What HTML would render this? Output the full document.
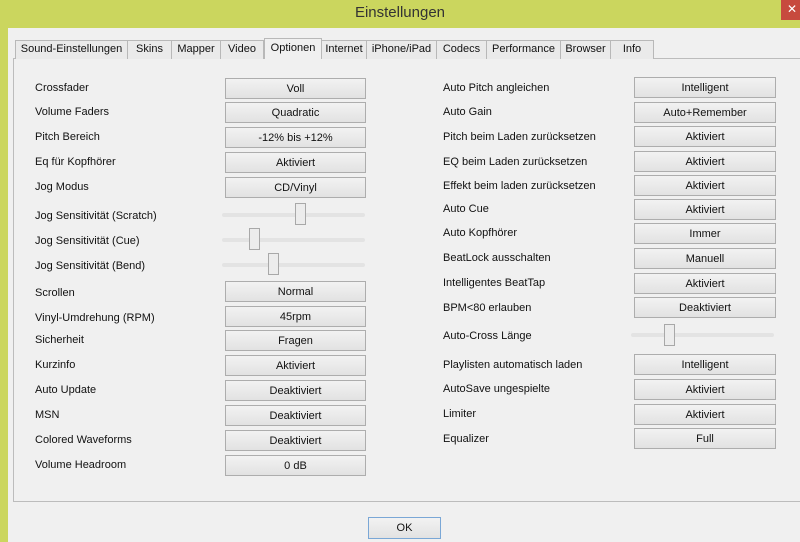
<!DOCTYPE html>
<html><head><meta charset="utf-8"><style>
*{margin:0;padding:0;box-sizing:border-box}
body{width:800px;height:542px;overflow:hidden;background:#cbd65e;font-family:"Liberation Sans",sans-serif;font-size:11px;color:#111;position:relative}
.client{position:absolute;left:8px;top:28px;right:0;bottom:0;background:#f0f0f0}
.title{position:absolute;top:4px;left:0;width:800px;text-align:center;font-size:15px;color:#333}
.close{position:absolute;left:781px;top:0;width:30px;height:20px;background:#c74a3e;color:#fff;font-size:12px;padding-left:6px;line-height:18px}
.panel{position:absolute;left:13px;top:58px;width:790px;height:444px;border:1px solid #bcbcbc;background:#f0f0f0}
.tab{position:absolute;top:40px;height:19px;border:1px solid #b8b8b8;border-bottom:none;background:#eaeaea;text-align:center;line-height:17px;font-size:11px}
.tab.sel{top:38px;height:21px;background:#f0f0f0;z-index:2;line-height:19px}
.l{position:absolute;font-size:11px}
.b{position:absolute;height:21px;border:1px solid #adadad;background:linear-gradient(#f2f2f2,#e2e2e2);text-align:center;line-height:20px;font-size:11px}
.tr{position:absolute;height:4px;background:#e3e3e3;border-radius:2px}
.th{position:absolute;width:11px;height:22px;border:1px solid #a8a8a8;background:#ececec}
</style></head><body>
<div class="title">Einstellungen</div>
<div class="close">✕</div>
<div class="client"></div>
<div class="panel"></div>
<div class="tab" style="left:15px;width:113px">Sound-Einstellungen</div>
<div class="tab" style="left:127px;width:45px">Skins</div>
<div class="tab" style="left:171px;width:50px">Mapper</div>
<div class="tab" style="left:220px;width:44px">Video</div>
<div class="tab sel" style="left:264px;width:58px">Optionen</div>
<div class="tab" style="left:321px;width:46px">Internet</div>
<div class="tab" style="left:366px;width:71px">iPhone/iPad</div>
<div class="tab" style="left:436px;width:51px">Codecs</div>
<div class="tab" style="left:486px;width:75px">Performance</div>
<div class="tab" style="left:560px;width:51px">Browser</div>
<div class="tab" style="left:610px;width:44px">Info</div>

<div class="l" style="left:35px;top:82px">Crossfader</div><div class="b" style="left:225px;top:78px;width:141px">Voll</div>
<div class="l" style="left:35px;top:106px">Volume Faders</div><div class="b" style="left:225px;top:102px;width:141px">Quadratic</div>
<div class="l" style="left:35px;top:131px">Pitch Bereich</div><div class="b" style="left:225px;top:127px;width:141px">-12% bis +12%</div>
<div class="l" style="left:35px;top:156px">Eq für Kopfhörer</div><div class="b" style="left:225px;top:152px;width:141px">Aktiviert</div>
<div class="l" style="left:35px;top:181px">Jog Modus</div><div class="b" style="left:225px;top:177px;width:141px">CD/Vinyl</div>
<div class="l" style="left:35px;top:210px">Jog Sensitivität (Scratch)</div><div class="tr" style="left:222px;top:213px;width:143px"></div><div class="th" style="left:295px;top:203px"></div>
<div class="l" style="left:35px;top:235px">Jog Sensitivität (Cue)</div><div class="tr" style="left:222px;top:238px;width:143px"></div><div class="th" style="left:249px;top:228px"></div>
<div class="l" style="left:35px;top:260px">Jog Sensitivität (Bend)</div><div class="tr" style="left:222px;top:263px;width:143px"></div><div class="th" style="left:268px;top:253px"></div>
<div class="l" style="left:35px;top:287px">Scrollen</div><div class="b" style="left:225px;top:281px;width:141px">Normal</div>
<div class="l" style="left:35px;top:312px">Vinyl-Umdrehung (RPM)</div><div class="b" style="left:225px;top:306px;width:141px">45rpm</div>
<div class="l" style="left:35px;top:334px">Sicherheit</div><div class="b" style="left:225px;top:330px;width:141px">Fragen</div>
<div class="l" style="left:35px;top:359px">Kurzinfo</div><div class="b" style="left:225px;top:355px;width:141px">Aktiviert</div>
<div class="l" style="left:35px;top:384px">Auto Update</div><div class="b" style="left:225px;top:380px;width:141px">Deaktiviert</div>
<div class="l" style="left:35px;top:409px">MSN</div><div class="b" style="left:225px;top:405px;width:141px">Deaktiviert</div>
<div class="l" style="left:35px;top:434px">Colored Waveforms</div><div class="b" style="left:225px;top:430px;width:141px">Deaktiviert</div>
<div class="l" style="left:35px;top:459px">Volume Headroom</div><div class="b" style="left:225px;top:455px;width:141px">0 dB</div>

<div class="l" style="left:443px;top:82px">Auto Pitch angleichen</div><div class="b" style="left:634px;top:77px;width:142px">Intelligent</div>
<div class="l" style="left:443px;top:106px">Auto Gain</div><div class="b" style="left:634px;top:102px;width:142px">Auto+Remember</div>
<div class="l" style="left:443px;top:131px">Pitch beim Laden zurücksetzen</div><div class="b" style="left:634px;top:126px;width:142px">Aktiviert</div>
<div class="l" style="left:443px;top:156px">EQ beim Laden zurücksetzen</div><div class="b" style="left:634px;top:151px;width:142px">Aktiviert</div>
<div class="l" style="left:443px;top:180px">Effekt beim laden zurücksetzen</div><div class="b" style="left:634px;top:175px;width:142px">Aktiviert</div>
<div class="l" style="left:443px;top:203px">Auto Cue</div><div class="b" style="left:634px;top:199px;width:142px">Aktiviert</div>
<div class="l" style="left:443px;top:227px">Auto Kopfhörer</div><div class="b" style="left:634px;top:223px;width:142px">Immer</div>
<div class="l" style="left:443px;top:252px">BeatLock ausschalten</div><div class="b" style="left:634px;top:248px;width:142px">Manuell</div>
<div class="l" style="left:443px;top:277px">Intelligentes BeatTap</div><div class="b" style="left:634px;top:273px;width:142px">Aktiviert</div>
<div class="l" style="left:443px;top:302px">BPM&lt;80 erlauben</div><div class="b" style="left:634px;top:297px;width:142px">Deaktiviert</div>
<div class="l" style="left:443px;top:330px">Auto-Cross Länge</div><div class="tr" style="left:631px;top:333px;width:143px"></div><div class="th" style="left:664px;top:324px"></div>
<div class="l" style="left:443px;top:359px">Playlisten automatisch laden</div><div class="b" style="left:634px;top:354px;width:142px">Intelligent</div>
<div class="l" style="left:443px;top:383px">AutoSave ungespielte</div><div class="b" style="left:634px;top:379px;width:142px">Aktiviert</div>
<div class="l" style="left:443px;top:408px">Limiter</div><div class="b" style="left:634px;top:404px;width:142px">Aktiviert</div>
<div class="l" style="left:443px;top:433px">Equalizer</div><div class="b" style="left:634px;top:428px;width:142px">Full</div>

<div class="b" style="left:368px;top:517px;width:73px;height:22px;border-color:#7aa7d6">OK</div>
</body></html>
